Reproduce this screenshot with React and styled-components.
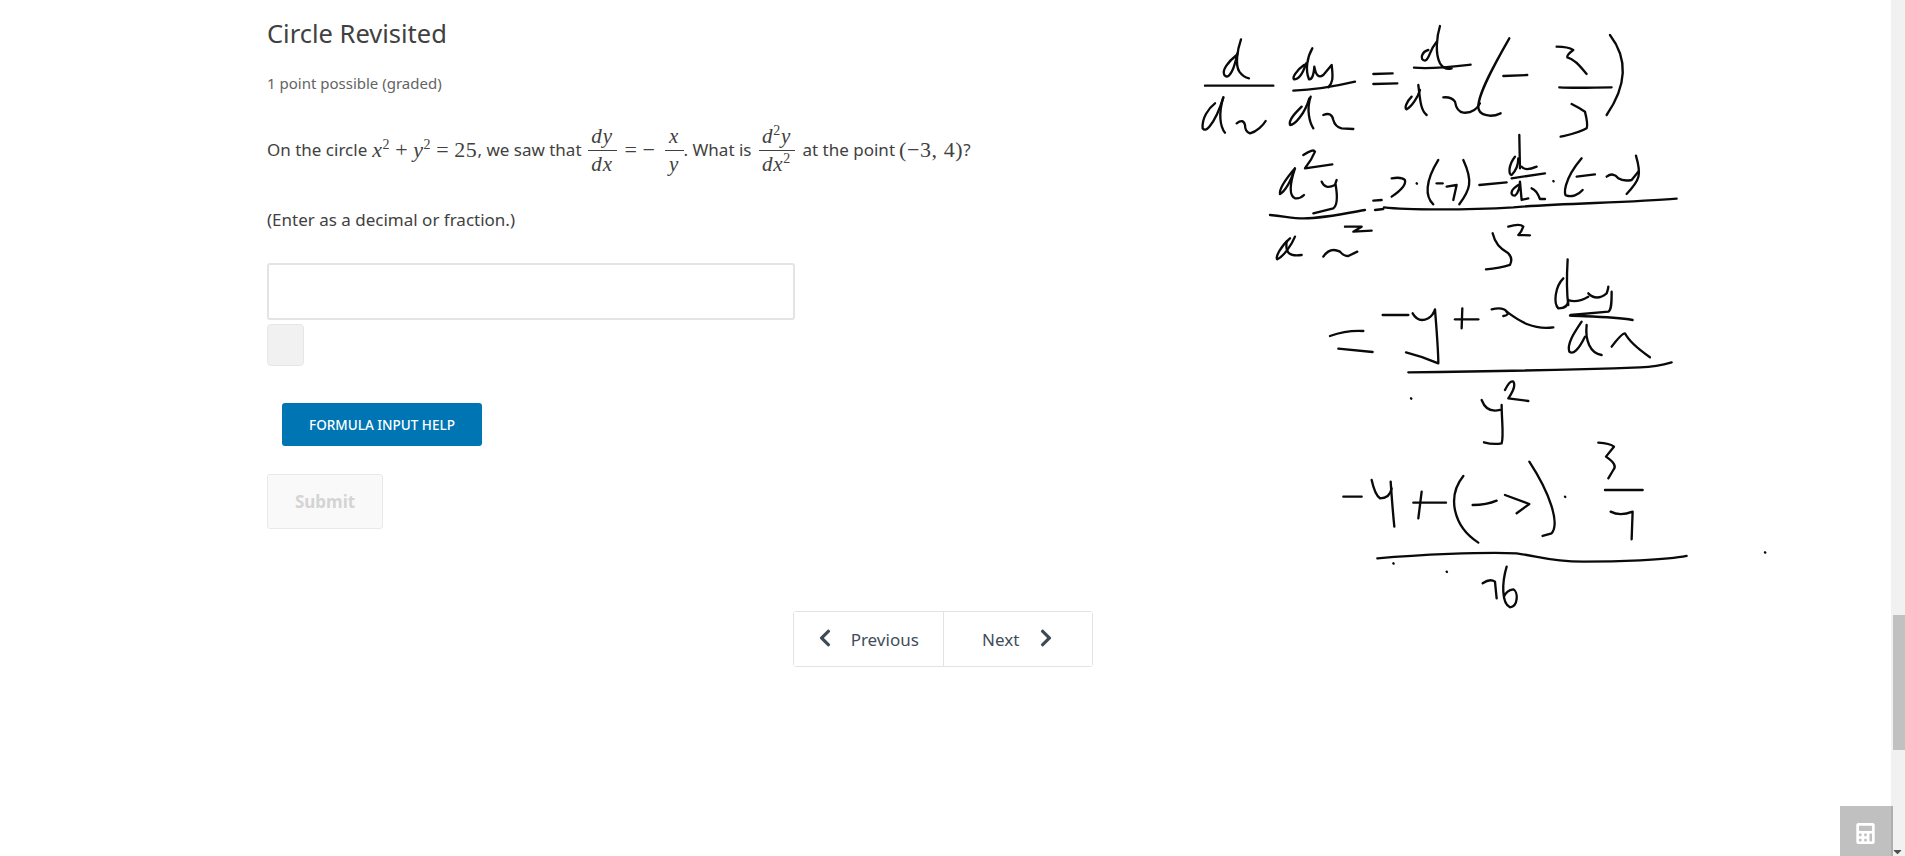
import React from "react";
import styled, { createGlobalStyle } from "styled-components";
import { FaChevronLeft, FaChevronRight, FaCalculator, FaCaretDown } from "react-icons/fa";

const Global = createGlobalStyle`
  html, body { margin: 0; padding: 0; height: 100%; background: #fff; overflow: hidden; }
  body { font-family: "Noto Sans", "Open Sans", "Liberation Sans", sans-serif; color: #414141; }
`;

const Page = styled.div`
  position: relative;
  width: 1905px;
  height: 856px;
  overflow: hidden;
`;
const Column = styled.main`
  width: 860px;
  padding: 16px 0 0 267px;
  display: flex;
  flex-direction: column;
  align-items: flex-start;
`;
const Title = styled.h3`
  margin: 0;
  font-size: 25.5px;
  line-height: 34px;
  font-weight: 400;
  color: #414141;
`;
const Meta = styled.div`
  margin-top: 22px;
  font-size: 15px;
  line-height: 22px;
  color: #646464;
`;
const Question = styled.p`
  margin: 28px 0 0;
  height: 56px;
  display: flex;
  align-items: center;
  white-space: pre;
  font-size: 17px;
  line-height: 26px;
`;
const Hint = styled.p`
  margin: 29px 0 0;
  font-size: 17px;
  line-height: 26px;
`;
const Math = styled.span`
  font-family: "Liberation Serif", "DejaVu Serif", serif;
  font-size: 22px;
  letter-spacing: 0.6px;
  margin: 0 ${(p) => p.$right || 0}px 0 ${(p) => p.$left || 0}px;
`;
const Var = styled.i`
  font-family: "Liberation Serif", serif;
`;
const Op = styled.span`
  margin: 0 5px;
`;
const Sup = styled.sup`
  font-size: 14px;
  line-height: 0;
  font-style: normal;
`;
const Fraction = styled.span`
  display: inline-flex;
  flex-direction: column;
  align-items: center;
  width: ${(p) => p.$w}px;
  margin: 0 ${(p) => p.$right || 0}px 0 ${(p) => p.$left || 0}px;
  font-family: "Liberation Serif", serif;
  font-size: 21px;
  letter-spacing: 0.8px;
  line-height: 27px;
`;
const Num = styled.span`
  width: 100%;
  text-align: center;
  border-bottom: 1px solid #414141;
  font-style: italic;
`;
const Den = styled.span`
  font-style: italic;
`;
const AnswerInput = styled.input`
  box-sizing: border-box;
  margin-top: 30px;
  width: 528px;
  height: 57px;
  background: #fff;
  border: 2px solid #e4e4e4;
  border-radius: 3px;
`;
const Status = styled.div`
  box-sizing: border-box;
  margin-top: 4px;
  width: 37px;
  height: 42px;
  background: #f1f1f1;
  border: 1px solid #e6e6e6;
  border-radius: 4px;
`;
const HelpButton = styled.button`
  margin: 37px 0 0 15px;
  width: 200px;
  height: 43px;
  border: 0;
  border-radius: 3px;
  background: #0075b4;
  color: #fff;
  font-family: inherit;
  font-size: 13.5px;
  font-weight: 500;
`;
const SubmitButton = styled.button`
  box-sizing: border-box;
  margin-top: 28px;
  width: 116px;
  height: 55px;
  background: #f9f9f9;
  border: 1px solid #e9e9e9;
  border-radius: 3px;
  color: #d4d4d4;
  font-family: inherit;
  font-size: 17px;
  font-weight: 700;
`;
const Nav = styled.nav`
  box-sizing: border-box;
  margin: 82px 0 0 526px;
  width: 300px;
  height: 56px;
  display: flex;
  border: 1px solid #e3e3e3;
  border-radius: 3px;
`;
const NavButton = styled.button`
  flex: 1;
  display: flex;
  align-items: center;
  justify-content: center;
  gap: ${(p) => p.$gap}px;
  padding: 0;
  background: #fff;
  border: 0;
  border-left: ${(p) => (p.$divided ? "1px solid #e3e3e3" : "0")};
  color: #414d5a;
  font-family: inherit;
  font-size: 17px;
  svg { width: 14px; height: 20px; color: #3d4a57; margin-top: -2px; }
`;
const Ink = styled.svg`
  position: absolute;
  left: 0;
  top: 0;
  width: 1905px;
  height: 856px;
  pointer-events: none;
  fill: none;
  stroke: #0a0a0a;
  stroke-linecap: round;
  stroke-linejoin: round;
`;
const ScrollTrack = styled.div`
  position: absolute;
  right: 0;
  top: 0;
  bottom: 0;
  width: 14px;
  background: #f1f1f1;
`;
const ScrollThumb = styled.div`
  position: absolute;
  right: 0;
  top: 615px;
  width: 12px;
  height: 135px;
  background: #c1c1c1;
`;
const ScrollArrow = styled.div`
  position: absolute;
  right: 1px;
  bottom: -2px;
  color: #505050;
  font-size: 13px;
  line-height: 0;
`;
const CalcButton = styled.button`
  position: absolute;
  right: 12px;
  bottom: 0;
  width: 53px;
  height: 50px;
  padding: 0;
  background: #c0c0c0;
  border: 0;
  border-right: 2px solid #aeaeae;
  color: #fff;
  svg { width: 19px; height: 21px; display: block; margin: 4px auto 0; }
`;

const sketchTop = [
  "M183 118C172 150 165 195 178 215Q190 232 207 235","M170 165C145 185 125 210 133 225Q145 240 160 205C165 190 170 175 172 160","M75 257L280 257",
  "M105 310C85 325 65 355 68 385Q75 395 88 380C105 360 120 325 130 292","M130 292C115 340 120 380 135 398","M170 370Q190 355 195 375Q195 395 210 400C230 395 250 375 257 363",
  "M397 145C382 170 375 210 387 238Q400 240 403 200Q410 240 430 225L455 195C460 235 458 250 445 262","M372 195C350 210 335 235 342 238C360 238 372 210 378 190","M340 272C400 270 470 258 525 245",
  "M365 320C345 340 325 360 330 375C345 375 375 340 388 295","M392 290C378 330 390 370 400 385","M430 345Q455 335 460 360Q465 380 485 385L520 387",
  "M580 222L638 220","M580 252L652 250",
  "M780 78C770 110 765 160 780 190Q795 212 815 205","M745 150C725 155 718 180 735 182C750 178 745 155 770 125","M702 203C760 208 820 200 872 194",
  "M715 255C720 290 720 330 740 345","M695 290C680 305 672 325 680 328C695 320 715 290 720 270","M790 292Q815 290 825 305Q830 335 850 338C875 340 890 330 900 310",
  "M988 115C945 190 895 280 895 320C895 345 930 355 962 340","M970 228L1042 225",
  "M1130 140Q1165 140 1180 150Q1160 165 1162 172C1190 180 1205 205 1220 222","M1138 262C1190 265 1245 262 1295 262","M1175 312Q1200 325 1215 335Q1225 375 1220 385C1195 400 1165 405 1142 410","M1290 105C1340 170 1345 250 1280 345",
  "M345 505C315 540 298 570 300 582C320 570 335 535 345 505C330 550 325 585 345 595Q360 597 372 585","M370 465Q400 445 405 455Q395 480 375 505L457 493",
  "M425 545Q435 570 465 555L470 540","M467 555C473 590 473 615 460 625L400 640","M270 645C320 650 340 655 370 655C430 655 500 640 555 630",
  "M330 715C300 740 285 775 292 778C310 770 335 735 345 710","M320 725C315 760 330 770 365 765","M430 770Q450 740 480 755Q490 768 505 768L532 755","M495 680L545 680L520 695L575 692",
  "M580 602L605 600","M585 630L610 627",
  "M635 535Q665 530 675 540Q680 560 635 590","M710 550L711 551","M775 480C735 545 735 590 760 613","M770 550L788 550","M800 560L830 555L820 600","M850 480C880 545 870 570 838 613","M898 555L980 547",
  "M1018 405L1020 505","M1005 470C985 495 985 525 995 525C1010 510 1015 490 1015 475","M1025 500Q1035 515 1070 500","M995 535L1095 520",
  "M1015 555C990 570 990 587 1005 587C1015 580 1020 560 1020 545L1025 600L1045 595","M1055 565Q1070 570 1080 597L1095 597","M1120 543L1121 544",
  "M1205 475C1150 540 1150 587 1160 587C1175 592 1195 585 1208 570","M1190 530L1245 523","M1280 530Q1300 515 1315 535Q1330 545 1355 540L1375 515","M1368 467C1385 525 1380 540 1340 582",
  "M612 622C680 630 860 630 1000 622C1150 610 1350 608 1490 596",
  "M938 700C945 730 960 745 985 760Q1000 775 990 795Q960 805 918 808","M985 680Q1020 670 1030 680Q1025 695 1015 705L1050 706",
];
const sketchBottom = [
  "M90 258Q140 240 190 243","M115 296L218 306","M248 195L325 195",
  "M338 190Q355 220 385 205Q400 195 405 178C410 240 415 310 415 340Q370 320 318 307","M465 208L535 208","M487 175L485 235",
  "M575 178Q610 170 620 185Q630 195 610 198","M620 185C660 215 700 240 760 232",
  "M803 28C800 80 800 130 805 165","M790 85C765 110 760 160 775 175C795 175 805 165 805 150Q830 160 865 140","M865 130Q890 155 920 130Q925 115 925 110","M935 125C935 155 935 180 925 185Q870 190 812 195","M810 197C870 200 940 200 998 210",
  "M845 215C825 245 800 280 808 305Q825 320 855 260","M860 225C855 270 870 310 905 315","M935 290Q965 250 975 250Q990 280 1050 322",
  "M325 367C500 365 800 360 1020 352Q1070 350 1115 337","M333 445L334 446",
  "M545 450Q560 490 600 480","M605 465C605 510 612 560 605 580Q580 585 552 577","M615 420Q630 390 640 395Q650 410 625 445L685 453",
  "M130 740L185 740","M215 690Q225 735 240 745Q270 745 275 715","M272 695C275 740 280 800 283 830","M340 758L438 758","M365 725L355 805",
  "M490 678C440 740 460 830 535 878","M518 765Q560 765 590 752","M615 735L688 762L650 790","M688 635C750 730 780 820 755 850L728 858","M795 740L796 741",
  "M895 578Q930 580 942 590L918 620Q955 645 940 660L925 685","M915 720L1028 720","M932 785Q960 800 998 785L995 868",
  "M232 925C350 915 550 905 650 910C720 920 750 935 850 935C950 935 1100 930 1160 918",
  "M280 940L281 941","M440 965L441 966","M1395 907L1396 908",
  "M548 1000Q570 985 585 995L590 1045","M620 950C605 1000 605 1060 630 1072C655 1070 655 1025 640 1018Q620 1020 612 1040",
];

export default function App() {
  return (
    <Page>
      <Global />
      <Column>
        <Title>Circle Revisited</Title>
        <Meta>1 point possible (graded)</Meta>
        <Question>
          On the circle
          <Math $left={5}><Var>x</Var><Sup>2</Sup><Op>+</Op><Var>y</Var><Sup>2</Sup><Op>=</Op>25</Math>, we saw that
          <Fraction $w={29} $left={6}><Num>dy</Num><Den>dx</Den></Fraction>
          <Math $left={8} $right={4}>=<Op>−</Op></Math>
          <Fraction $w={19}><Num>x</Num><Den>y</Den></Fraction>. What is
          <Fraction $w={36} $left={7} $right={8}><Num>d<Sup>2</Sup>y</Num><Den>dx<Sup>2</Sup></Den></Fraction>
          at the point
          <Math $left={4}>(−3, 4)</Math>?
        </Question>
        <Hint>(Enter as a decimal or fraction.)</Hint>
        <AnswerInput aria-label="answer" />
        <Status />
        <HelpButton>FORMULA INPUT HELP</HelpButton>
        <SubmitButton>Submit</SubmitButton>
        <Nav>
          <NavButton $gap={19}><FaChevronLeft />Previous</NavButton>
          <NavButton $gap={20} $divided>Next<FaChevronRight /></NavButton>
        </Nav>
      </Column>
      <Ink viewBox="0 0 1905 856">
        <g transform="translate(1180 0) scale(0.3333)" strokeWidth="7">
          {sketchTop.map((d) => <path key={d} d={d} />)}
        </g>
        <g transform="translate(1300 250) scale(0.3333)" strokeWidth="7">
          {sketchBottom.map((d) => <path key={d} d={d} />)}
        </g>
      </Ink>
      <ScrollTrack>
        <ScrollThumb />
        <ScrollArrow><FaCaretDown /></ScrollArrow>
      </ScrollTrack>
      <CalcButton aria-label="calculator"><FaCalculator /></CalcButton>
    </Page>
  );
}
